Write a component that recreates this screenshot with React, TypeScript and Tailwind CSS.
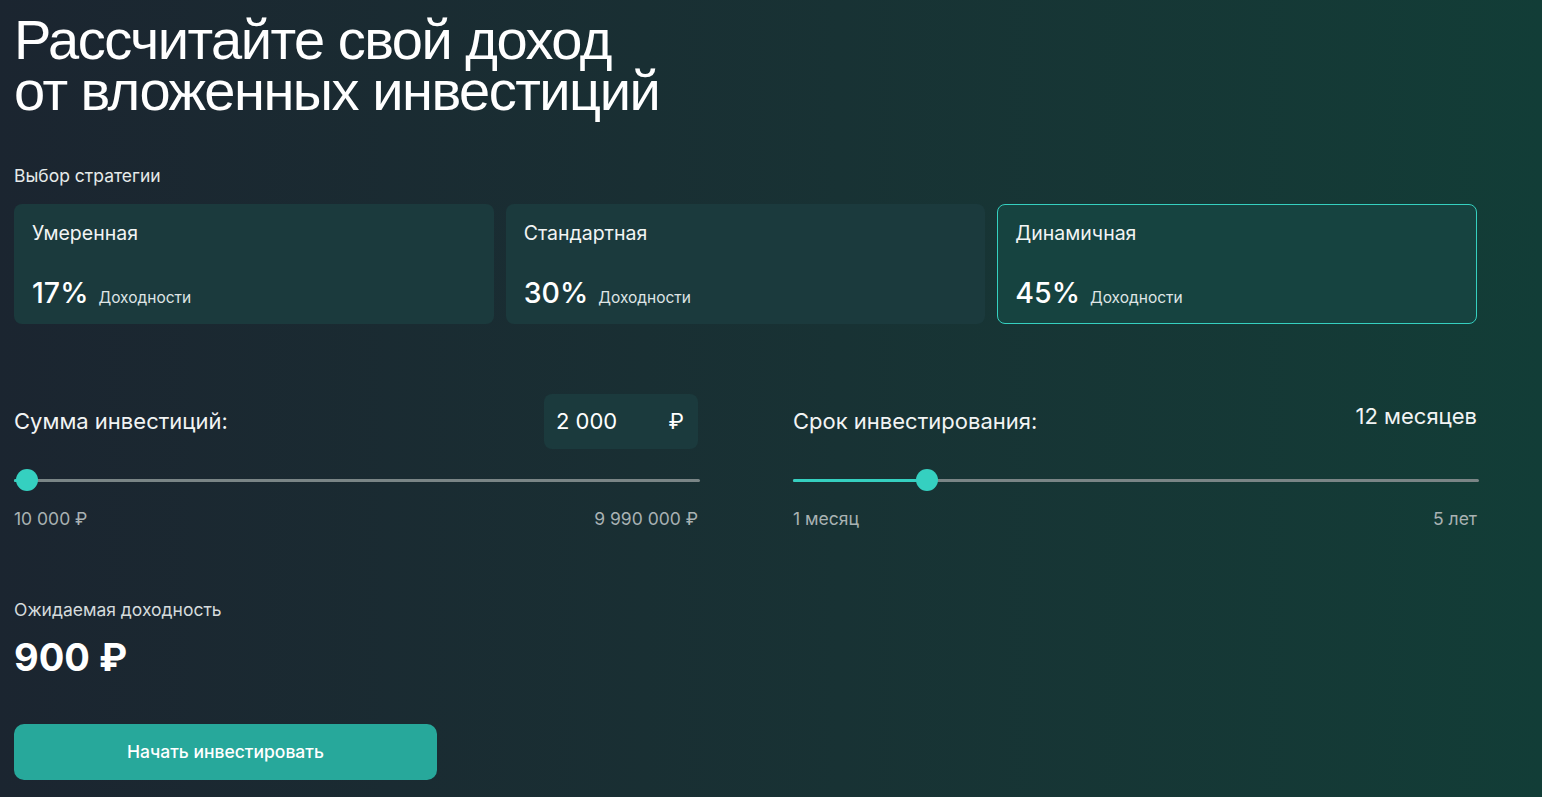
import { useState } from 'react'

const strategies = [
  { name: 'Умеренная', rate: 17 },
  { name: 'Стандартная', rate: 30 },
  { name: 'Динамичная', rate: 45 },
]

// p: 0..1, thumb kept inside the track the way a native range input does
function Slider({ p }: { p: number }) {
  const pos = `calc(11px + ${p} * (100% - 22px))`
  return (
    <div className="relative h-[22px]">
      <div className="absolute left-0 right-[-2px] top-[10px] h-[3px] rounded-full bg-[#7a8586]" />
      <div className="absolute left-0 top-[10px] h-[3px] rounded-full bg-[#35d0c0]" style={{ width: pos }} />
      <div
        className="absolute top-0 h-[22px] w-[22px] -translate-x-1/2 rounded-full bg-[#35d0c0]"
        style={{ left: pos }}
      />
    </div>
  )
}

export default function App() {
  const [selected, setSelected] = useState(2)

  return (
    <div className="min-h-[797px] w-full bg-gradient-to-r from-[#1b2530] to-[#123d37] px-[14px] pt-[14px] pb-4 text-white font-['Inter',sans-serif]">
      <h1 className="font-['Liberation_Sans',Arial,sans-serif] text-[56px] leading-[51px] tracking-[-1.5px] text-white">
        Рассчитайте свой доход
        <br />
        от вложенных инвестиций
      </h1>

      <p className="mt-[48px] text-[17.5px] leading-[24px] text-[#e6eaea]">Выбор стратегии</p>

      <div className="mt-[16px] grid w-[1463px] grid-cols-3 gap-[12px]">
        {strategies.map((s, i) => (
          <button
            key={s.name}
            type="button"
            onClick={() => setSelected(i)}
            className={`flex h-[120px] flex-col rounded-[8px] px-[17px] pt-[15px] text-left ${
              i === selected
                ? 'border border-[#35d0c0] bg-[#164340]'
                : 'border border-transparent bg-[#1b3a3d]'
            }`}
          >
            <span className="text-[19.5px] leading-[26px] text-[#f2f4f4]">{s.name}</span>
            <span className="mt-[31px] flex items-baseline gap-[10px]">
              <span className="text-[28.5px] font-medium leading-[32px]">{s.rate}%</span>
              <span className="text-[15.5px] text-[#dfe5e5]">Доходности</span>
            </span>
          </button>
        ))}
      </div>

      <div className="mt-[70px] grid w-[1463px] grid-cols-2 gap-[95px]">
        <div>
          <div className="flex h-[55px] items-center justify-between">
            <span className="text-[22px] text-[#f2f4f4]">Сумма инвестиций:</span>
            <div className="flex h-[55px] w-[154px] items-center justify-between rounded-[8px] bg-[#1b3a3d] pl-[12px] pr-[14px] text-[22px]">
              <span>2 000</span>
              <span>₽</span>
            </div>
          </div>
          <div className="mt-[20px]">
            <Slider p={0.003} />
          </div>
          <div className="mt-[15px] flex justify-between text-[17.5px] text-[#a9b2b3]">
            <span>10 000 ₽</span>
            <span>9 990 000 ₽</span>
          </div>
        </div>

        <div>
          <div className="flex h-[55px] items-center justify-between">
            <span className="text-[22px] text-[#f2f4f4]">Срок инвестирования:</span>
            <span className="-mt-[10px] text-[22px] text-[#f2f4f4]">12 месяцев</span>
          </div>
          <div className="mt-[20px]">
            <Slider p={11 / 59} />
          </div>
          <div className="mt-[15px] flex justify-between text-[17.5px] text-[#a9b2b3]">
            <span>1 месяц</span>
            <span>5 лет</span>
          </div>
        </div>
      </div>

      <p className="mt-[65px] text-[17.5px] leading-[26px] text-[#d5dbdc]">Ожидаемая доходность</p>
      <p className="mt-[10px] text-[38px] font-bold leading-[48px]">900 ₽</p>

      <button
        type="button"
        className="mt-[43px] h-[56px] w-[423px] rounded-[10px] bg-[#27a89b] text-[17.5px] font-medium text-white"
      >
        Начать инвестировать
      </button>
    </div>
  )
}
